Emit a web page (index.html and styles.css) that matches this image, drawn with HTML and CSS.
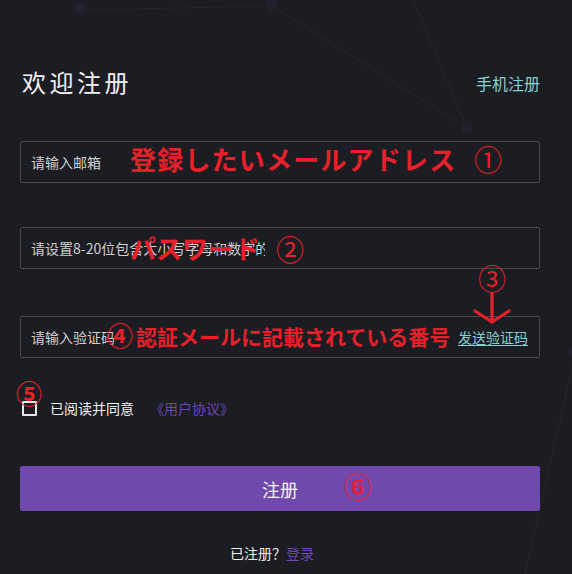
FILE: index.html
```html
<!DOCTYPE html>
<html lang="zh">
<head>
<meta charset="utf-8">
<title>欢迎注册</title>
<link rel="stylesheet" href="styles.css">
</head>
<body>
<svg class="bg-net" width="572" height="574" viewBox="0 0 572 574" aria-hidden="true">
  <g stroke="#24242c" stroke-width="1.2" fill="none">
    <line x1="80" y1="10" x2="272" y2="6"/>
    <line x1="272" y1="6" x2="467" y2="128"/>
    <line x1="413" y1="0" x2="466" y2="126"/>
    <line x1="576" y1="350" x2="525" y2="574"/>
  </g>
  <g fill="#22222a">
    <circle cx="80" cy="8" r="6"/>
    <circle cx="272" cy="5" r="6"/>
    <circle cx="467" cy="128" r="6"/>
    <circle cx="574" cy="352" r="6"/>
  </g>
</svg>

<main class="page">
  <header class="head">
    <h1 class="title">欢迎注册</h1>
    <a class="switch" href="#">手机注册</a>
  </header>

  <div class="field field-1">
    <input class="inp" type="text" placeholder="请输入邮箱">
  </div>
  <div class="field field-2">
    <input class="inp inp-narrow" type="password" placeholder="请设置8-20位包含大小写字母和数字的密码">
  </div>
  <div class="field field-3">
    <input class="inp" type="text" placeholder="请输入验证码">
    <a class="send" href="#">发送验证码</a>
  </div>

  <label class="agree">
    <span class="box"></span>
    <span class="agree-text">已阅读并同意</span>
    <a class="protocol" href="#">《用户协议》</a>
  </label>

  <button class="submit" type="button">注册</button>

  <p class="login">已注册？<a href="#">登录</a></p>
</main>

<div class="ann ann-1">登録したいメールアドレス</div>
<div class="num num-1">①</div>
<div class="ann ann-2">パスワード</div>
<div class="num num-2">②</div>
<div class="num num-3">③</div>
<svg class="arrow" width="44" height="34" viewBox="0 0 44 34" aria-hidden="true">
  <g stroke="#e8202a" stroke-width="3.2" fill="none" stroke-linecap="round" stroke-linejoin="round">
    <line x1="22" y1="1" x2="22" y2="30"/>
    <polyline points="5,19 22,30 39,19"/>
  </g>
</svg>
<div class="num num-4">④</div>
<div class="ann ann-4">認証メールに記載されている番号</div>
<div class="num num-5">⑤</div>
<div class="num num-6">⑥</div>
</body>
</html>
```

FILE: styles.css
```css
html, body {
  margin: 0;
  padding: 0;
}
body {
  width: 572px;
  height: 574px;
  background: #1c1c23;
  position: relative;
  overflow: hidden;
  font-family: "Noto Sans CJK SC", "Noto Sans", sans-serif;
  color: #e6e6e6;
}
.bg-net {
  position: absolute;
  left: 0;
  top: 0;
}
.page {
  position: relative;
  padding: 66px 32px 0 20px;
}
.head {
  display: flex;
  justify-content: space-between;
  align-items: center;
  height: 32px;
  margin-bottom: 43px;
}
.title {
  margin: 0 0 0 2px;
  font-size: 24px;
  font-weight: 400;
  letter-spacing: 3.5px;
  line-height: 32px;
  color: #f2f2f2;
}
.switch {
  font-size: 16px;
  color: #86cfcf;
  text-decoration: none;
  line-height: 32px;
  margin-top: 2px;
}
.field {
  box-sizing: border-box;
  height: 42px;
  border: 1px solid #4a4a52;
  border-radius: 2px;
  display: flex;
  align-items: center;
  padding: 0 11px 0 10px;
}
.field-1 { margin-bottom: 44px; }
.field-2 { margin-bottom: 47px; }
.inp {
  flex: 1;
  min-width: 0;
  background: transparent;
  border: none;
  outline: none;
  padding: 0;
  font-family: "Noto Sans CJK SC", sans-serif;
  font-size: 14px;
  color: #d0d0d0;
}
.inp::placeholder {
  color: #cfcfcf;
  opacity: 1;
}
.inp-narrow {
  flex: none;
  width: 234px;
}
.send {
  font-size: 14px;
  color: #86d0d0;
  text-decoration: underline;
  text-underline-offset: 2px;
}
.agree {
  display: flex;
  align-items: center;
  height: 20px;
  margin-top: 40px;
  font-size: 14px;
}
.box {
  box-sizing: border-box;
  width: 15px;
  height: 15px;
  border: 2px solid #e8e8e8;
  border-radius: 1px;
  margin: 0 13px 0 2px;
}
.agree-text {
  color: #f0f0f0;
  margin-right: 16px;
}
.protocol {
  color: #6748b4;
  text-decoration: none;
}
.submit {
  display: block;
  width: 100%;
  height: 45px;
  margin-top: 48px;
  border: none;
  border-radius: 2px;
  background: #7149ad;
  color: #f4f4f4;
  font-family: "Noto Sans CJK SC", sans-serif;
  font-size: 18px;
  padding: 0;
}
.login {
  margin: 32px 0 0;
  line-height: 20px;
  text-align: center;
  font-size: 14px;
  color: #f0f0f0;
  padding-right: 16px;
}
.login a {
  color: #6a4bb2;
  text-decoration: none;
}

/* annotation overlay */
.ann, .num {
  position: absolute;
  color: #e8202a;
  white-space: nowrap;
  font-family: "Noto Sans CJK JP", sans-serif;
}
.ann {
  font-weight: 700;
  font-size: 26px;
  line-height: 26px;
}
.num {
  font-size: 28px;
  line-height: 28px;
  font-weight: 400;
}
.ann-1 { left: 130px; top: 146px; letter-spacing: 1.2px; }
.num-1 { left: 474px; top: 145px; }
.ann-2 { left: 130px; top: 235px; }
.num-2 { left: 276px; top: 235px; }
.num-3 { left: 478px; top: 264px; }
.arrow {
  position: absolute;
  left: 470px;
  top: 292px;
}
.num-4 { left: 107px; top: 322px; font-size: 26px; line-height: 26px; font-weight: 700; }
.ann-4 { left: 136px; top: 326px; font-size: 21px; line-height: 21px; }
.num-5 { left: 16px; top: 380px; font-size: 26px; line-height: 26px; font-weight: 700; }
.num-6 { left: 344px; top: 472px; color: #e2203e; font-weight: 700; }
```
